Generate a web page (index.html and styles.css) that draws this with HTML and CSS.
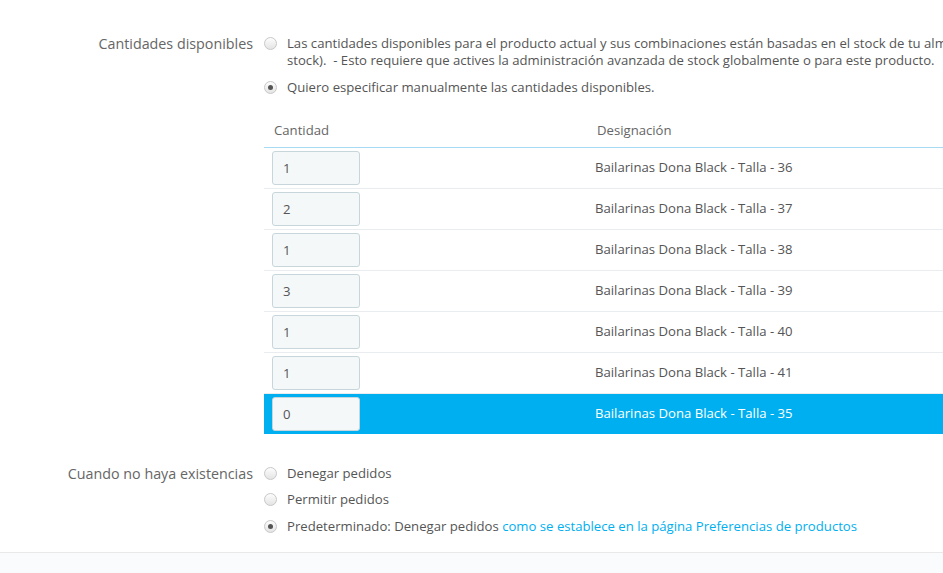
FILE: index.html
```html
<!DOCTYPE html>
<html lang="es">
<head>
  <meta charset="UTF-8">
  <title>Cantidades</title>
  <link rel="stylesheet" href="styles.css">
</head>
<body>
  <div class="panel">
    <div class="fila">
      <label class="etiqueta">Cantidades disponibles</label>
      <div class="campo">
        <div class="opcion">
          <span class="radio"></span>
          <span class="texto">Las cantidades disponibles para el producto actual y sus combinaciones están basadas en el stock de tu almacén (ver Catálogo &gt; Gestión de stock &gt; Stock).<br>stock).&nbsp; - Esto requiere que actives la administración avanzada de stock globalmente o para este producto.</span>
        </div>
        <div class="opcion">
          <span class="radio marcado"></span>
          <span class="texto">Quiero especificar manualmente las cantidades disponibles.</span>
        </div>

        <table class="tabla">
          <thead>
            <tr>
              <th class="col-cantidad">Cantidad</th>
              <th>Designación</th>
            </tr>
          </thead>
          <tbody>
            <tr><td><input type="text" value="1"></td><td>Bailarinas Dona Black - Talla - 36</td></tr>
            <tr><td><input type="text" value="2"></td><td>Bailarinas Dona Black - Talla - 37</td></tr>
            <tr><td><input type="text" value="1"></td><td>Bailarinas Dona Black - Talla - 38</td></tr>
            <tr><td><input type="text" value="3"></td><td>Bailarinas Dona Black - Talla - 39</td></tr>
            <tr><td><input type="text" value="1"></td><td>Bailarinas Dona Black - Talla - 40</td></tr>
            <tr><td><input type="text" value="1"></td><td>Bailarinas Dona Black - Talla - 41</td></tr>
            <tr class="activa"><td><input type="text" value="0"></td><td>Bailarinas Dona Black - Talla - 35</td></tr>
          </tbody>
        </table>
      </div>
    </div>

    <div class="fila existencias">
      <label class="etiqueta">Cuando no haya existencias</label>
      <div class="campo">
        <div class="opcion">
          <span class="radio"></span>
          <span class="texto">Denegar pedidos</span>
        </div>
        <div class="opcion">
          <span class="radio"></span>
          <span class="texto">Permitir pedidos</span>
        </div>
        <div class="opcion">
          <span class="radio marcado"></span>
          <span class="texto">Predeterminado: Denegar pedidos <a href="#">como se establece en la página Preferencias de productos</a></span>
        </div>
      </div>
    </div>
  </div>
  <div class="pie"></div>
</body>
</html>
```

FILE: styles.css
```css
html, body {
  margin: 0;
  background: #fff;
}
body {
  font-family: "Open Sans", "DejaVu Sans", sans-serif;
  font-size: 13.15px;
  line-height: 17px;
  color: #555;
  overflow: hidden;
  height: 573px;
  width: 943px;
}
.panel {
  width: 1300px;
  padding-top: 35px;
  padding-bottom: 17px;
  border-bottom: 1px solid #e9e9e9;
}
.fila {
  display: flex;
  align-items: flex-start;
}
.etiqueta {
  width: 253px;
  flex: none;
  text-align: right;
  color: #666;
  font-size: 14.3px;
}
.campo {
  margin-left: 11px;
  flex: 1;
}
.opcion {
  display: flex;
  align-items: flex-start;
  gap: 10px;
  margin-bottom: 9.5px;
}
.opcion:last-child {
  margin-bottom: 0;
}
.texto {
  white-space: nowrap;
}
.radio {
  flex: none;
  box-sizing: border-box;
  width: 13px;
  height: 13px;
  margin-top: 2px;
  border-radius: 50%;
  border: 1px solid #c8c8c8;
  background: linear-gradient(#fdfdfd, #e4e4e4);
  position: relative;
}
.radio.marcado::after {
  content: "";
  position: absolute;
  left: 3px;
  top: 3px;
  width: 5px;
  height: 5px;
  border-radius: 50%;
  background: #555;
}
a {
  color: #00aff0;
  text-decoration: none;
}
.tabla {
  margin-top: 17px;
  width: 1000px;
  border-collapse: collapse;
}
.tabla th {
  text-align: left;
  font-weight: normal;
  color: #666;
  padding: 9px 10px 8px;
  border-bottom: 1px solid #a6dbf3;
}
.tabla .col-cantidad {
  width: 303px;
}
.tabla td {
  padding: 3px 8px;
  height: 34px;
  border-bottom: 1px solid #eaedef;
}
.tabla tr.activa td {
  background: #00aff0;
  color: #fff;
  border-bottom: none;
}
.tabla input {
  display: block;
  box-sizing: border-box;
  width: 88px;
  height: 34px;
  padding: 0 10px;
  font-family: inherit;
  font-size: 13.15px;
  color: #555;
  background: #f5f8f9;
  border: 1px solid #c7d6db;
  border-radius: 3px;
}
.existencias {
  margin-top: 31px;
}
.pie {
  background: #fafbfc;
  height: 40px;
}
```
